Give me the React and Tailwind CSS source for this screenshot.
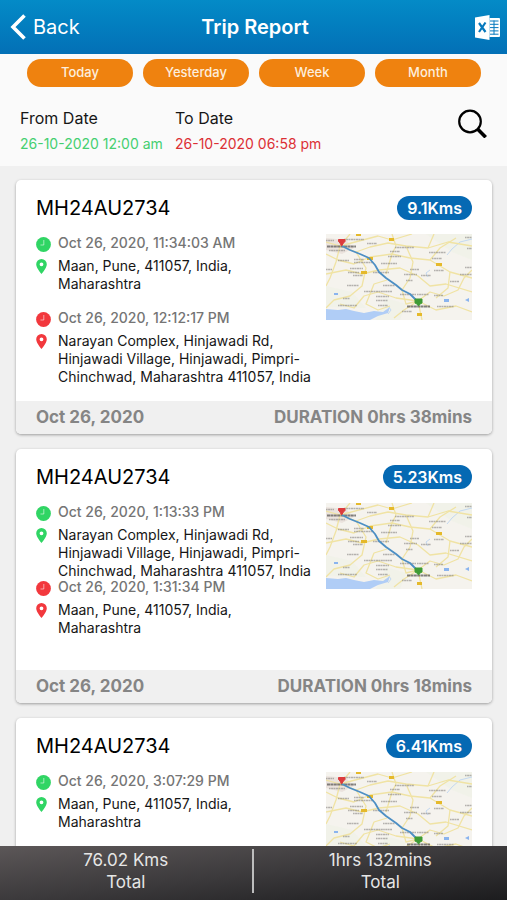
const trips = [
  {
    id: 1,
    vehicle: "MH24AU2734",
    distance: "9.1Kms",
    start: { time: "Oct 26, 2020, 11:34:03 AM", place: "Maan, Pune, 411057, India, Maharashtra" },
    end: {
      time: "Oct 26, 2020, 12:12:17 PM",
      place: "Narayan Complex, Hinjawadi Rd, Hinjawadi Village, Hinjawadi, Pimpri-Chinchwad, Maharashtra 411057, India",
    },
    date: "Oct 26, 2020",
    duration: "DURATION 0hrs 38mins",
  },
  {
    id: 2,
    vehicle: "MH24AU2734",
    distance: "5.23Kms",
    start: {
      time: "Oct 26, 2020, 1:13:33 PM",
      place: "Narayan Complex, Hinjawadi Rd, Hinjawadi Village, Hinjawadi, Pimpri-Chinchwad, Maharashtra 411057, India",
    },
    end: { time: "Oct 26, 2020, 1:31:34 PM", place: "Maan, Pune, 411057, India, Maharashtra" },
    date: "Oct 26, 2020",
    duration: "DURATION 0hrs 18mins",
  },
  {
    id: 3,
    vehicle: "MH24AU2734",
    distance: "6.41Kms",
    start: { time: "Oct 26, 2020, 3:07:29 PM", place: "Maan, Pune, 411057, India, Maharashtra" },
  },
];

function ExcelIcon() {
  return (
    <svg viewBox="0 0 25 25" className="h-[25px] w-[25px]" aria-hidden="true">
      <path d="M0 2.5 14.5 0v25L0 22.500z" fill="#fff" />
      <path d="M14.500 3H24a1 1 0 0 1 1 1v17a1 1 0 0 1-1 1h-9.500" fill="#fff" />
      <path d="M4 8l6.500 9M10.500 7.500 4 17" stroke="#0578bd" strokeWidth="2.200" fill="none" />
      <path d="M15 6h8.500M15 9.300h8.500M15 12.600h8.500M15 15.900h8.500M15 19.200h8.500M19 5.500v14" stroke="#0578bd" strokeWidth="1" fill="none" />
    </svg>
  );
}

function ClockIcon({ color }) {
  return (
    <svg viewBox="0 0 15 15" className="mt-[3px] h-[15px] w-[15px] shrink-0" aria-hidden="true">
      <circle cx="7.5" cy="7.5" r="7.400" fill={color} />
      <path d="M7.800 3v5H4.500" fill="none" stroke="#fff" strokeOpacity=".55" strokeWidth="1" />
    </svg>
  );
}

function PinIcon({ color }) {
  return (
    <svg viewBox="0 0 11 15" className="mt-[2px] h-[15px] w-[11px] shrink-0" aria-hidden="true">
      <path
        fillRule="evenodd"
        fill={color}
        d="M5.500 0A5.300 5.300 0 0 0 .2 5.300C.2 9.200 5.500 15 5.500 15s5.300-5.800 5.300-9.700A5.300 5.300 0 0 0 5.500 0zm0 3.400a1.900 1.900 0 1 1 0 3.800 1.900 1.900 0 0 1 0-3.800z"
      />
    </svg>
  );
}

const roads = [
  "M0 8 14 12 30 18 44 13 62 9 80 12 102 14 122 8 146 12",
  "M14 12 10 28 4 44 0 52",
  "M14 12 24 0",
  "M30 18 40 34 36 52 24 62 8 66 0 74",
  "M44 23 66 20 84 24 104 26 124 38 146 44",
  "M44 23 28 30 12 26 0 20",
  "M53 36 36 40 20 36 0 40",
  "M53 36 74 34 92 42 104 52 120 50 146 58",
  "M80 12 87 28 84 44 76 56 80 70 92 67",
  "M92 67 70 64 52 58 38 62 28 74 14 70",
  "M92 67 96 86M92 67 110 76 130 72 146 78",
  "M92 67 104 58 118 62 132 56 138 44 146 36",
  "M66 0 70 12 66 20 60 40",
  "M102 14 108 0M104 26 114 14 130 4",
  "M124 38 122 54 110 64",
  "M61 46 48 50 40 70 52 76 64 72",
  "M92 67 78 76 68 84",
  "M14 12 52 2 66 6 86 0",
];

const labels = [
  [0, 6, 8], [18, 5, 20], [41, 9, 10], [69, 13, 19], [3, 16, 16], [64, 17, 10], [103, 18, 17],
  [12, 26, 11], [28, 25, 10], [28, 28, 19], [62, 22, 13], [106, 24, 10], [55, 29, 16], [84, 35, 9],
  [0, 35, 6], [24, 34, 13], [22, 38, 11], [27, 41, 10], [47, 38, 16], [78, 40, 13], [95, 41, 10],
  [21, 51, 12], [57, 51, 12], [80, 46, 7], [108, 36, 10], [134, 40, 12], [124, 47, 9],
  [38, 57, 28], [74, 60, 16], [91, 60, 12], [108, 61, 9], [17, 64, 7], [50, 62, 13], [50, 66, 12],
  [12, 71, 19], [52, 71, 10], [111, 72, 17], [76, 77, 10], [139, 3, 7], [141, 14, 5], [139, 33, 7],
];

function RouteMap() {
  return (
    <svg viewBox="0 0 146 86" className="h-[86px] w-[146px]" role="img" aria-label="Trip route map">
      <rect width="146" height="86" fill="#f5f3ee" />
      <path d="M100 0h46v26l-20-8zM0 52l26 6 14 16-40-1zM60 64l20 6-6 16H50z" fill="#eef1e6" opacity=".6" />
      <path d="M0 4 20 6 28 14 16 20 0 16z" fill="#ebe3de" />
      <path d="M0 75 12 76 20 75 28 77 38 79 48 77 57 78 64 73 62 79 52 82 44 86H0z" fill="#b0cdf6" />
      <path d="M146 5 134 8 126 15 121 21M104 36l-4 3 2 4M62 72l3 4-3 4" fill="none" stroke="#c3d8f0" />
      {roads.map((d) => (
        <path key={d} d={d} fill="none" strokeLinejoin="round" stroke="#f0e3a4" strokeWidth="1.300" />
      ))}
      {labels.map(([x, y, w]) => (
        <path
          key={`${x}-${y}`}
          d={`M${x} ${y + 0.5}h${w}`}
          stroke="#8d8a87"
          strokeWidth="1.400"
          strokeDasharray="1.600 .5 2.300 .4"
          opacity=".62"
        />
      ))}
      <path d="M1 12.500h29M81 72.500h23" stroke="#5d5a58" strokeWidth="2" strokeDasharray="3 .4" opacity=".75" />
      <path
        d="M30 0h5v2h-5zM63 4h5v3h-5zM110 29h6v3h-6zM35 37h6v3h-6zM41 23h6v3h-6zM91 79h5v3h-5z"
        fill="#e5b92b"
      />
      <path d="M8 59h4v2H8zM118 65h5v3h-5zM139 66l4-2v4z" fill="#8ab4ee" />
      <path
        d="M16 12 24 16 34 20 43 24 49 31 53 38 60 44 70 51 76 56 84 60 92 68"
        fill="none"
        stroke="#4d8fc4"
        strokeWidth="1.800"
        strokeLinejoin="round"
      />
      <path d="M15.500 12 14 9 12.500 7.500V5.500h6.500v2L17.500 9z" fill="#dc3b3d" stroke="#dc3b3d" strokeLinejoin="round" />
      <path d="M92.500 72 91 70l-2-1v-4h7v4l-2 1z" fill="#3f9b35" stroke="#3f9b35" strokeLinejoin="round" />
    </svg>
  );
}

function Stop({ time, place, color }) {
  return (
    <div className="h-[75px] leading-[18px]">
      <div className="flex">
        <div className="w-[22px] shrink-0">
          <ClockIcon color={color} />
        </div>
        <p className="text-sm leading-[18px] font-medium text-[#757575]">{time}</p>
      </div>
      <div className="mt-[5px] flex">
        <div className="w-[22px] shrink-0">
          <PinIcon color={color} />
        </div>
        <p className="text-sm leading-[18px] text-[#161616]">{place}</p>
      </div>
    </div>
  );
}

function TripCard({ trip }) {
  return (
    <article className="flex h-[254px] shrink-0 flex-col overflow-hidden rounded-[5px] bg-white shadow-[0_1px_3px_rgba(0,0,0,0.35)]">
      <div className="flex grow flex-col px-5 pt-4">
        <div className="flex h-6 items-center justify-between">
          <h2 className="text-xl text-black">{trip.vehicle}</h2>
          <span className="flex h-6 items-center rounded-full bg-[#0569b3] px-2.5 text-base font-semibold text-white">
            {trip.distance}
          </span>
        </div>
        <div className="mt-3.5 flex justify-between">
          <div className="w-[278px]">
            <Stop {...trip.start} color="#30d564" />
            {trip.end && <Stop {...trip.end} color="#f2383d" />}
          </div>
          <RouteMap />
        </div>
      </div>
      {trip.date && (
        <footer className="flex h-[33px] shrink-0 items-center justify-between bg-[#f0f0f0] px-5 text-[17px] font-bold text-[#858585]">
          <span>{trip.date}</span>
          <span>{trip.duration}</span>
        </footer>
      )}
    </article>
  );
}

export default function App() {
  return (
    <div className="flex h-screen flex-col overflow-hidden bg-[#f0f0f0] font-['Inter',sans-serif]">
      <header className="grid h-[54px] shrink-0 grid-cols-3 items-center bg-gradient-to-b from-[#048bc7] to-[#0370b6] pr-[7px] pl-2.5 text-xl text-white">
        <button type="button" className="flex items-center gap-[7px] justify-self-start">
          <svg viewBox="0 0 16 26" className="h-[26px] w-4" aria-hidden="true">
            <path d="M14.500 1.500 3 13l11.500 11.500" fill="none" stroke="#fff" strokeWidth="3.600" />
          </svg>
          Back
        </button>
        <h1 className="text-center font-semibold">Trip Report</h1>
        <button type="button" aria-label="Export to Excel" className="justify-self-end">
          <ExcelIcon />
        </button>
      </header>

      <section className="shrink-0 bg-[#fafafa] pb-[13px]">
        <div className="grid grid-cols-4 gap-2.5 pt-[5px] pr-[26px] pl-[27px]">
          {["Today", "Yesterday", "Week", "Month"].map((label) => (
            <button key={label} type="button" className="h-7 rounded-full bg-[#ef820f] text-[13px] font-medium text-[#fdeedd]">
              {label}
            </button>
          ))}
        </div>
        <div className="flex items-center pt-5 pr-5 pl-5">
          <div className="w-[155px]">
            <p className="text-base leading-[22px] text-[#161616]">From Date</p>
            <p className="mt-1.5 text-sm leading-[18px] whitespace-nowrap text-[#45cf70]">26-10-2020 12:00 am</p>
          </div>
          <div className="grow">
            <p className="text-base leading-[22px] text-[#161616]">To Date</p>
            <p className="mt-1.5 text-sm leading-[18px] whitespace-nowrap text-[#dc2f35]">26-10-2020 06:58 pm</p>
          </div>
          <button type="button" aria-label="Search" className="h-[46px]">
            <svg viewBox="0 0 30 30" className="mb-[14px] h-[30px] w-[30px]" aria-hidden="true">
              <circle cx="13" cy="13.500" r="10.800" fill="none" stroke="#000" strokeWidth="2.200" />
              <path d="m20.300 20.800 8.400 8.400" stroke="#000" strokeWidth="3.600" />
            </svg>
          </button>
        </div>
      </section>

      <main className="flex grow basis-0 flex-col gap-[15px] overflow-y-auto pt-[14px] pr-[15px] pl-4 [scrollbar-width:none]">
        {trips.map((trip) => (
          <TripCard key={trip.id} trip={trip} />
        ))}
      </main>

      <footer className="grid h-[54px] shrink-0 grid-cols-2 bg-gradient-to-br from-[#5c5758] via-[#3c3a3c] to-[#1c1c1e] pt-[3px] pb-[7px] text-center text-[17px] leading-[22px] text-[#e6e6e6]">
        <div className="border-r-2 border-[#bdbdbd]">
          <p>76.02 Kms</p>
          <p>Total</p>
        </div>
        <div>
          <p>1hrs 132mins</p>
          <p>Total</p>
        </div>
      </footer>
    </div>
  );
}
